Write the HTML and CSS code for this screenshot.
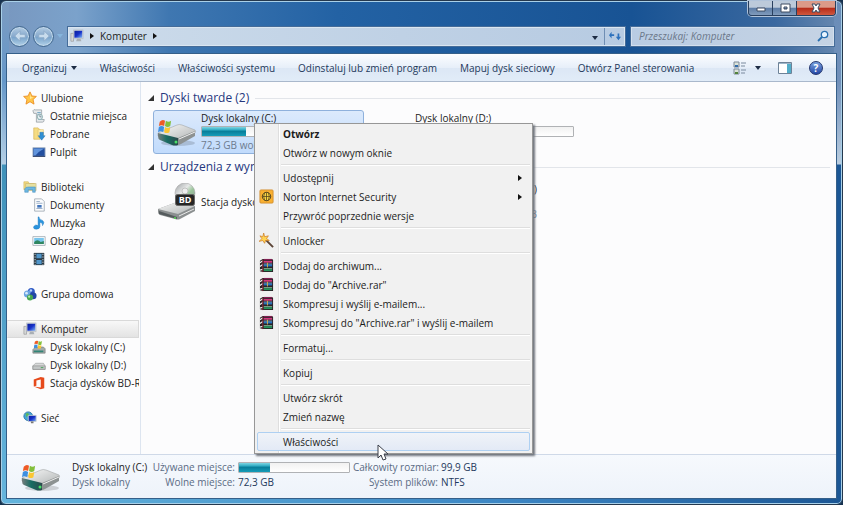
FILE: index.html
```html
<!DOCTYPE html>
<html lang="pl">
<head>
<meta charset="utf-8">
<title>Komputer</title>
<link rel="stylesheet" href="styles.css">
</head>
<body>
<svg class="sprite" aria-hidden="true">
  <defs>
    <linearGradient id="gTop" x1="0" y1="0" x2="1" y2="1"><stop offset="0" stop-color="#fafafa"/><stop offset="1" stop-color="#aeb2b2"/></linearGradient>
    <linearGradient id="gSide" x1="0" y1="0" x2="1" y2="0"><stop offset="0" stop-color="#777d7d"/><stop offset=".45" stop-color="#176c62"/><stop offset="1" stop-color="#2c4a4c"/></linearGradient>
    <linearGradient id="gDisc" x1="0" y1="0" x2="1" y2="1"><stop offset="0" stop-color="#9a9da0"/><stop offset=".4" stop-color="#e6e8e8"/><stop offset=".6" stop-color="#9cc69c"/><stop offset="1" stop-color="#8f9498"/></linearGradient>
    <linearGradient id="gBlue" x1="0" y1="0" x2="1" y2="1"><stop offset="0" stop-color="#0c1f98"/><stop offset=".5" stop-color="#1630c8"/><stop offset="1" stop-color="#7fb6f4"/></linearGradient>
  </defs>
  <symbol id="flag" viewBox="0 0 16 16"><path d="M2 3Q5 0 8 2L7 8Q4 6 1 8z" fill="#ee5a25"/><path d="M9 2Q12 4 15 2L14 8Q11 10 8 8z" fill="#83bf3b"/><path d="M1 9Q4 7 7 9L6 15Q3 13 0 15z" fill="#3e8fe0"/><path d="M8 9Q11 11 14 9L13 15Q10 17 7 15z" fill="#fbc632"/></symbol>
  <symbol id="drive" viewBox="0 0 40 26">
    <ellipse cx="21" cy="22" rx="17" ry="3" fill="#000" opacity=".15"/>
    <path d="M1 12L20 4Q22 3 25 4L38 9Q39 10 38 12L22 20 1 15z" fill="url(#gTop)" stroke="#a2a6a6" stroke-width=".6"/>
    <path d="M1 12L21 17V24Q18 25 15 24L3 19Q1 18 1 15z" fill="url(#gSide)"/>
    <path d="M21 17L38 10V15L24 23Q22 24 21 24z" fill="#8d9292"/>
    <path d="M22 18L38 11" stroke="#eee"/><circle cx="19" cy="21" r="1.5" fill="#48e068"/>
  </symbol>
  <symbol id="windrive" viewBox="0 0 40 30"><use href="#drive" y="4" width="40" height="26"/><use href="#flag" x="1" y="2" width="14" height="14"/></symbol>
  <symbol id="smalldrive" viewBox="0 0 16 16"><path d="M1 9L4 6H13L15 9V13H1z" fill="#d8dada" stroke="#969a9a" stroke-width=".7"/><path d="M1 9H15V13H1z" fill="#c3c7c7" stroke="#888" stroke-width=".7"/><path d="M10 11H13" stroke="#3a9b4e"/></symbol>
  <symbol id="smallwin" viewBox="0 0 16 16"><path d="M1 11L4 8H13L15 10V15H1z" fill="#a4aaa9" stroke="#6e7474" stroke-width=".7"/><path d="M2 12H13V14H2z" fill="#318577"/><use href="#flag" x="2" y="0" width="10" height="10"/></symbol>
  <symbol id="pc" viewBox="0 0 16 16"><path d="M1 5H4V14H1z" fill="#d5d7d8" stroke="#888" stroke-width=".6"/><path d="M4 1H15V11H4z" fill="#d4d9df" stroke="#a2a9b0" stroke-width=".5"/><path d="M5 2H14V10H5z" fill="url(#gBlue)"/><path d="M8 11H12L13 14H7z" fill="#a9afb5"/></symbol>
  <symbol id="star" viewBox="0 0 16 16"><path d="M8 1L10.200 5.700 15.300 6.200 11.500 9.700 12.600 15 8 12.200 3.400 15 4.500 9.700.7 6.200 5.800 5.700z" fill="#ffc648" stroke="#ea8b22"/><path d="M8 3L9 7 12 7 8 9z" fill="#ffeaa0"/></symbol>
  <symbol id="recent" viewBox="0 0 16 16"><path d="M1 2Q2 0 4 1H11V12H14Q14 15 12 15H5V5H2z" fill="#e6e9eb" stroke="#8c959c" stroke-width=".8"/><path d="M6 4H10M6 6H10M7 12H11" stroke="#6da0c0"/><circle cx="9" cy="9" r="3" fill="#e6f1f6" stroke="#8aa"/><path d="M9 7V9H11" stroke="#456" fill="none" stroke-width=".7"/></symbol>
  <symbol id="down" viewBox="0 0 16 16"><path d="M2 1H7L9 3V14H2z" fill="#f5dc83" stroke="#d2ae49" stroke-width=".7"/><path d="M7 3H13V12H7z" fill="#ffefb0" stroke="#d2ae49" stroke-width=".5"/><path d="M9 6H13V10H15L11 15 7 10H9z" fill="#2f8fd4" stroke="#2471ad" stroke-width=".5"/></symbol>
  <symbol id="desktop" viewBox="0 0 16 16"><path d="M1 3H15V13H1z" fill="#234f9f" stroke="#b1bdcb"/><path d="M2 4H14Q8 7 4 12H2z" fill="#6194dc"/><path d="M1 13H15" stroke="#1b2e58"/></symbol>
  <symbol id="lib" viewBox="0 0 16 16"><path d="M1 2H6L7 4H13V11H1z" fill="#f4dc82" stroke="#c9a84a" stroke-width=".6"/><path d="M3 4H15V12H3z" fill="#e6e0a0" stroke="#b9a45c" stroke-width=".5"/><path d="M2 14V10Q3 8 6 8H14V14H11V11H6V14z" fill="#6cb7e2" stroke="#3d8bbd" stroke-width=".6"/></symbol>
  <symbol id="doc" viewBox="0 0 16 16"><path d="M3 1H11L14 4V15H3z" fill="#fbfcfd" stroke="#8d98a4" stroke-width=".8"/><path d="M5 4H9M5 6H12M5 12H12" stroke="#91a7c3"/><path d="M6 8H11V11H6z" fill="#4175bd"/></symbol>
  <symbol id="note" viewBox="0 0 16 16"><path d="M8 1Q8 4 12 5Q15 7 12 11Q13 8 9 7V12Q9 15 5 15Q1 15 2 12Q4 9 7 11V1z" fill="#2a94de" stroke="#1675bd" stroke-width=".5"/></symbol>
  <symbol id="image" viewBox="0 0 16 16"><path d="M1 3H15V13H1z" fill="#fff" stroke="#8e9ba4" stroke-width=".8"/><path d="M2.500 4.500H13.500V11.500H2.500z" fill="#77c5ed"/><path d="M2.500 9Q6 5 10 9L13.500 8V11.500H2.500z" fill="#2f8660"/></symbol>
  <symbol id="film" viewBox="0 0 16 16"><path d="M2 1H14V15H2z" fill="#293945"/><path d="M5 2H11V7H5zM5 9H11V14H5z" fill="#5196ca"/><path d="M3.500 2V15M12.500 2V15" stroke="#dce3e6" stroke-dasharray="1.500 1.500"/></symbol>
  <symbol id="group" viewBox="0 0 16 16"><circle cx="9.500" cy="5" r="4" fill="#315bc5"/><circle cx="5" cy="8" r="4" fill="#6ba4e2"/><circle cx="11.500" cy="10" r="4" fill="#2346a5"/><circle cx="8" cy="12" r="3.500" fill="#48a750"/><circle cx="9" cy="4" r="1.500" fill="#b9d5fb"/><circle cx="4" cy="7" r="1.500" fill="#d6eafb"/><circle cx="7" cy="11" r="1.200" fill="#baf0b0"/></symbol>
  <symbol id="office" viewBox="0 0 16 16"><path d="M2 4L10 1 14 2V14L10 15 2 12 10 13V4L5 5V11L2 12z" fill="#e64a1c"/></symbol>
  <symbol id="net" viewBox="0 0 16 16"><circle cx="6" cy="6" r="5" fill="#47a5d6" stroke="#2a78a5"/><path d="M3 3Q6 1 7 4L4 7zM6 7L9 9 6 11z" fill="#59b85b"/><path d="M6 5H15V12H6z" fill="url(#gBlue)" stroke="#c2cbd2"/><path d="M9 12H12V14H9z" fill="#777"/></symbol>
  <symbol id="norton" viewBox="0 0 16 16"><rect x="1" y="1" width="14" height="14" rx="1" fill="#f9b030" stroke="#d39032"/><circle cx="8" cy="8" r="4.500" fill="#f7d443" stroke="#51401a"/><path d="M3.500 8H12.500M8 3.500V12.500M6 4Q4 8 6 12M10 4Q12 8 10 12" stroke="#51401a" fill="none" stroke-width=".8"/></symbol>
  <symbol id="wand" viewBox="0 0 16 16"><path d="M7 7L15 15" stroke="#5c4436" stroke-width="2"/><path d="M5 0L6 4 10 3 8 6 11 8 7 8 6 11 4 8 0 9 3 6 1 3 4 4z" fill="#ffd454" stroke="#c9741d" stroke-width=".7"/></symbol>
  <symbol id="rar" viewBox="0 0 16 16">
    <path d="M1 3L4 1H14L15 2V15H4L1 14z" fill="#2a2226"/>
    <path d="M5 1H14V2H5z" fill="#8d1e58"/><path d="M5 3H14V5H5z" fill="#d2397f"/>
    <path d="M5 6H14V7H5z" fill="#8db4dc"/><path d="M5 7H14V9H5z" fill="#2472be"/>
    <path d="M5 11H14V12H5z" fill="#9ad3b2"/><path d="M5 12H14V14H5z" fill="#239258"/>
    <path d="M1 5L4 3M1 9L4 7M1 13L4 12" stroke="#eee" stroke-width="1.400"/>
    <path d="M4 2V15" stroke="#8e2a37"/><path d="M9 5V10" stroke="#d3b04e"/>
  </symbol>
</svg>

<div class="window">
  <header class="chrome">
    <div class="caption">
      <button class="cap" aria-label="Minimalizuj"><svg viewBox="0 0 12 10"><path d="M2 5H10V8H2z"/></svg></button>
      <button class="cap" aria-label="Maksymalizuj"><svg viewBox="0 0 12 10"><path d="M2 1H11V9H2zM5 4V6H8V4z" fill-rule="evenodd"/></svg></button>
      <button class="cap close" aria-label="Zamknij"><svg viewBox="0 0 12 10"><path d="M2 1H5L6 3 7 1H10L8 5 10 9H7L6 7 5 9H2L4 5z"/></svg></button>
    </div>
    <div class="navrow">
      <div class="travel">
        <button class="round" aria-label="Wstecz"><svg viewBox="0 0 16 16"><path d="M2 8L8 2V6H14V10H8V14z"/></svg></button>
        <button class="round" aria-label="Dalej"><svg viewBox="0 0 16 16"><path d="M14 8L8 2V6H2V10H8V14z"/></svg></button>
        <span class="tri pale"></span>
      </div>
      <nav class="address" aria-label="Adres">
        <svg class="i16"><use href="#pc"/></svg>
        <span class="tri right"></span>
        <button class="crumb">Komputer</button>
        <span class="tri right"></span>
        <button class="drop" aria-label="Historia"><span class="tri"></span></button>
        <button class="refresh" aria-label="Odśwież"><svg viewBox="0 0 14 14"><path d="M0 6L3 2V5H6V7H3V10zM14 8L11 12 8 8H10V4H12V8z" fill="#2d71bd"/></svg></button>
      </nav>
      <div class="search">
        <input type="text" aria-label="Przeszukaj" placeholder="Przeszukaj: Komputer">
        <svg class="lens" viewBox="0 0 12 12"><circle cx="7.500" cy="4.500" r="3.200" fill="#eaf5ff" stroke="#2a70b0" stroke-width="1.300"/><path d="M5 7L1 11" stroke="#2a70b0" stroke-width="1.800"/></svg>
      </div>
    </div>
  </header>

  <div class="client">
    <div class="toolbar">
      <button>Organizuj <span class="tri"></span></button>
      <button>Właściwości</button>
      <button>Właściwości systemu</button>
      <button>Odinstaluj lub zmień program</button>
      <button>Mapuj dysk sieciowy</button>
      <button>Otwórz Panel sterowania</button>
      <div class="tools">
        <button aria-label="Zmień widok"><svg class="i14" viewBox="0 0 14 14"><path d="M1 1H6V6H1zM1 8H6V13H1z" fill="#dce4da" stroke="#7d8998"/><path d="M2 4H5V6H2z" fill="#326ca9"/><path d="M2 11H5V13H2z" fill="#52833c"/><path d="M8 2H13M8 5H12M8 9H13M8 12H12" stroke="#7b8a9e"/></svg><span class="tri"></span></button>
        <button aria-label="Okienko podglądu"><svg class="i14" viewBox="0 0 14 14"><path d="M.5 1.500H13.500V12.500H.5z" fill="#fff" stroke="#6d8297"/><path d="M1 2H13V3H1z" fill="#9db5c9"/><path d="M9 3H13V12H9z" fill="#52adc9"/></svg></button>
        <button aria-label="Pomoc" class="help">?</button>
      </div>
    </div>

    <div class="body">
      <nav class="tree" aria-label="Nawigacja">
        <ul>
          <li><a href="#"><svg class="i16"><use href="#star"/></svg>Ulubione</a></li>
          <li class="sub"><a href="#"><svg class="i16"><use href="#recent"/></svg>Ostatnie miejsca</a></li>
          <li class="sub"><a href="#"><svg class="i16"><use href="#down"/></svg>Pobrane</a></li>
          <li class="sub"><a href="#"><svg class="i16"><use href="#desktop"/></svg>Pulpit</a></li>
        </ul>
        <ul>
          <li><a href="#"><svg class="i16"><use href="#lib"/></svg>Biblioteki</a></li>
          <li class="sub"><a href="#"><svg class="i16"><use href="#doc"/></svg>Dokumenty</a></li>
          <li class="sub"><a href="#"><svg class="i16"><use href="#note"/></svg>Muzyka</a></li>
          <li class="sub"><a href="#"><svg class="i16"><use href="#image"/></svg>Obrazy</a></li>
          <li class="sub"><a href="#"><svg class="i16"><use href="#film"/></svg>Wideo</a></li>
        </ul>
        <ul><li><a href="#"><svg class="i16"><use href="#group"/></svg>Grupa domowa</a></li></ul>
        <ul>
          <li class="selected"><a href="#"><svg class="i16"><use href="#pc"/></svg>Komputer</a></li>
          <li class="sub"><a href="#"><svg class="i16"><use href="#smallwin"/></svg>Dysk lokalny (C:)</a></li>
          <li class="sub"><a href="#"><svg class="i16"><use href="#smalldrive"/></svg>Dysk lokalny (D:)</a></li>
          <li class="sub"><a href="#"><svg class="i16"><use href="#office"/></svg>Stacja dysków BD-ROM</a></li>
        </ul>
        <ul><li><a href="#"><svg class="i16"><use href="#net"/></svg>Sieć</a></li></ul>
      </nav>

      <main class="files">
        <section>
          <h2><span class="corner"></span>Dyski twarde (2)</h2>
          <div class="tiles">
            <div class="tile active">
              <svg class="big" viewBox="0 0 40 30"><use href="#windrive"/></svg>
              <div class="info"><span>Dysk lokalny (C:)</span><div class="bar"><i class="fill"></i></div><span class="muted">72,3 GB wolnych</span></div>
            </div>
            <div class="tile">
              <span class="big"></span>
              <div class="info"><span>Dysk lokalny (D:)</span><div class="bar"></div></div>
            </div>
          </div>
        </section>
        <section>
          <h2><span class="corner"></span>Urządzenia z wymiennym</h2>
          <div class="tiles tall">
            <div class="tile">
              <svg class="big disc" viewBox="0 0 40 38">
                <path d="M1 26L20 19Q23 18 26 19L38 23V28L23 36Q21 37 18 36L3 32Q1 31 1 29z" fill="#8b8f90"/>
                <path d="M1 26L20 19Q23 18 26 19L38 23 21 31z" fill="url(#gTop)"/><path d="M2 28L20 34V36L2 31z" fill="#555b5d"/><path d="M22 33L37 26" stroke="#e8e8e8"/><circle cx="18" cy="35" r="1" fill="#5d5"/>
                <circle cx="28" cy="10" r="10" fill="url(#gDisc)" stroke="#999" stroke-width=".5"/><circle cx="28" cy="8" r="3" fill="#eee" stroke="#aaa" stroke-width=".6"/>
                <rect x="18.500" y="11.500" width="19" height="11" rx="2" fill="#262626" stroke="#666"/><text class="bd-text" x="28" y="20" text-anchor="middle">BD</text>
              </svg>
              <div class="info"><span>Stacja dysków</span></div>
            </div>
            <div class="tile">
              <span class="big"></span>
              <div class="info tail"><span>)</span><span class="muted">B</span></div>
            </div>
          </div>
        </section>
      </main>
    </div>

    <footer class="details">
      <svg class="big" viewBox="0 0 40 30"><use href="#windrive"/></svg>
      <div class="facts">
        <span class="name">Dysk lokalny (C:)</span><span class="key">Używane miejsce:</span><div class="bar"><i class="fill"></i></div><span class="key">Całkowity rozmiar:</span><span class="val">99,9 GB</span>
        <span class="kind">Dysk lokalny</span><span class="key">Wolne miejsce:</span><span class="val">72,3 GB</span><span class="key">System plików:</span><span class="val">NTFS</span>
      </div>
    </footer>
  </div>

  <div class="menu" role="menu">
    <button role="menuitem" class="default">Otwórz</button>
    <button role="menuitem">Otwórz w nowym oknie</button>
    <hr>
    <button role="menuitem">Udostępnij<span class="tri right"></span></button>
    <button role="menuitem"><svg class="i16"><use href="#norton"/></svg>Norton Internet Security<span class="tri right"></span></button>
    <button role="menuitem">Przywróć poprzednie wersje</button>
    <hr>
    <button role="menuitem"><svg class="i16"><use href="#wand"/></svg>Unlocker</button>
    <hr>
    <button role="menuitem"><svg class="i16"><use href="#rar"/></svg>Dodaj do archiwum...</button>
    <button role="menuitem"><svg class="i16"><use href="#rar"/></svg>Dodaj do "Archive.rar"</button>
    <button role="menuitem"><svg class="i16"><use href="#rar"/></svg>Skompresuj i wyślij e-mailem...</button>
    <button role="menuitem"><svg class="i16"><use href="#rar"/></svg>Skompresuj do "Archive.rar" i wyślij e-mailem</button>
    <hr>
    <button role="menuitem">Formatuj...</button>
    <hr>
    <button role="menuitem">Kopiuj</button>
    <hr>
    <button role="menuitem">Utwórz skrót</button>
    <button role="menuitem">Zmień nazwę</button>
    <hr>
    <button role="menuitem" class="hover">Właściwości</button>
  </div>
  <svg class="pointer" viewBox="0 0 12 18" aria-hidden="true"><path d="M1 1V14L4 11 6 16 9 15 7 10H11z" fill="#fff" stroke="#3a3f4a"/></svg>
</div>
</body>
</html>
```

FILE: styles.css
```css
* { box-sizing: border-box; }
body {
  margin: 0;
  background: #16324f;
  font: 10px/14px "Open Sans", "Noto Sans", sans-serif;
  color: #1c1c1c;
}
button, input { font: inherit; color: inherit; background: none; border: 0; padding: 0; margin: 0; }
a { color: inherit; text-decoration: none; }
ul { list-style: none; margin: 0; padding: 0; }
svg { display: block; flex: none; }
.sprite { position: absolute; width: 0; height: 0; }
.i16 { width: 14px; height: 14px; }
.i14 { width: 14px; height: 14px; }
.bd-text { font: bold 9px "Open Sans", sans-serif; fill: #fff; }

.tri { display: inline-block; flex: none; border: 3px solid transparent; border-top: 4px solid #1d2c44; border-bottom: 0; }
.tri.right { border: 3px solid transparent; border-left: 4px solid #111; border-right: 0; }
.tri.pale { border-top-color: #86b5dc; }

.window {
  position: relative;
  display: flex;
  flex-direction: column;
  min-height: 100vh;
  padding: 2px 6px 6px;
  border: 1px solid #25384d;
  border-radius: 6px;
  box-shadow: inset 0 0 0 1px #a9d0e8;
  background:
    linear-gradient(#6a8db8, #7190ba 80px, #bacddf 163px, #1c5795 164px) right / 8px 100% no-repeat,
    linear-gradient(#7d9cc1, #6597c9 80px, #b5cfe5 163px, #3f91b9 164px, #66b5dd) left / 8px 100% no-repeat,
    linear-gradient(90deg, #63b4dc, #3c86c4 60%, #1c5795) bottom / 100% 8px no-repeat,
    linear-gradient(90deg, #7897bf, #7ba2cb 9%, #3f77b1 20%, #2362a4 40%, #185394 75%, #3a689f 92%, #6a8ab1);
}

.chrome { display: flex; flex-direction: column; }
.caption { display: flex; align-self: flex-end; height: 15px; margin-top: -2px; border: 1px solid #29405f; border-top: 0; border-radius: 0 0 4px 4px; box-shadow: 0 0 0 1px #b0c3da; overflow: hidden; }
.cap { width: 24px; display: flex; justify-content: center; align-items: center; background: linear-gradient(#bccada 45%, #5d7da6 50%, #809bbc); border-right: 1px solid #29405f; }
.cap svg { width: 12px; height: 10px; fill: #fff; stroke: #3d4b60; stroke-width: 1; }
.close { width: 38px; border: 0; background: linear-gradient(#dc9a88 45%, #b52a18 50%, #d0583e); }
.navrow { display: flex; align-items: center; height: 38px; padding: 8px 2px 6px; }
.travel { display: flex; align-items: center; gap: 3px; width: 58px; margin-right: 1px; }
.round { flex: none; width: 21px; height: 21px; border: 1px solid #42688f; border-radius: 50%; background: linear-gradient(#b3cce3, #86a9cd 50%, #7ba5cc 55%, #b2d1e8); box-shadow: inset 0 0 0 1px #c3d9eb; display: flex; align-items: center; justify-content: center; }
.round svg { width: 14px; height: 14px; fill: #c8dced; stroke: #8ba9c8; }
.address { flex: 1; display: flex; align-items: center; gap: 6px; height: 19px; padding-left: 1px; background: linear-gradient(90deg, #cddceb, #bfd1e5 60%, #b7cbe2); border: 1px solid #dae6f1; outline: 1px solid #456c99; }
.drop { margin-left: auto; }
.refresh { width: 20px; height: 17px; border-left: 1px solid #6f8eb3; display: flex; align-items: center; justify-content: center; }
.refresh svg { width: 12px; height: 12px; }
.search { flex: 0 0 203px; display: flex; align-items: center; height: 19px; margin-left: 6px; padding: 0 4px 0 7px; background: linear-gradient(90deg, #b9cce3, #c5d3e4); border: 1px solid #d4e0ee; outline: 1px solid #456c99; }
.search input { flex: 1; min-width: 0; outline: 0; }
.search input::placeholder { color: #6b7789; font-style: italic; opacity: 1; }
.lens { width: 12px; height: 12px; }

.client { flex: 1; display: flex; flex-direction: column; background: #fcfcfd; outline: 1px solid #355f89; }
.toolbar { display: flex; align-items: center; gap: 23px; height: 28px; padding: 0 13px 0 15px; color: #1e395b; background: linear-gradient(#fcfdff, #e7eff9 50%, #dce7f5 52%, #e1ecf8); border-bottom: 1px solid #a9b8cc; }
.toolbar button { display: flex; align-items: center; gap: 4px; white-space: nowrap; }
.tools { display: flex; align-items: center; gap: 17px; margin-left: auto; }
.tools button { gap: 8px; }
.toolbar .help { justify-content: center; width: 14px; height: 14px; border: 1px solid #22356e; border-radius: 50%; background: linear-gradient(#7aa2e0, #2447a5); color: #fff; font-weight: bold; }

.body { flex: 1; display: flex; }
.tree { flex: 0 0 134px; display: flex; flex-direction: column; gap: 17px; padding: 7px 0; border-right: 1px solid #dde5f0; overflow: hidden; }
.tree li { height: 18px; padding-left: 16px; margin-right: 1px; overflow: hidden; white-space: nowrap; }
.tree li.sub { padding-left: 25px; }
.tree a { display: flex; align-items: center; gap: 4px; height: 100%; }
.tree .selected { padding-left: 15px; border: 1px solid #d9d9d9; background: linear-gradient(#f8f8f8, #e3e3e3); border-left-color: #eee; }

.files { flex: 1; min-width: 0; padding: 8px 6px 0 7px; }
.files h2 { display: flex; align-items: center; gap: 6px; margin: 0; height: 16px; font-size: 12px; line-height: 16px; font-weight: normal; color: #25377e; white-space: nowrap; }
.files h2::after { content: ""; flex: 1; height: 1px; background: #e2e5ea; }
.corner { border: 3px solid transparent; border-right-color: #333; border-bottom-color: #333; width: 0; height: 0; }
.tiles { display: grid; grid-template-columns: repeat(auto-fill, 211px); gap: 3px; padding: 4px 0 5px 5px; }
.tile { display: flex; align-items: center; gap: 4px; height: 44px; padding: 0 3px; border: 1px solid transparent; border-radius: 3px; }
.tile.active { border-color: #8fb1dc; background: linear-gradient(#dceafc, #c1dbfc); }
.big { width: 40px; height: 30px; flex: none; }
.big.disc { height: 38px; }
.info { flex: 1; min-width: 0; height: 42px; display: flex; flex-direction: column; justify-content: center; line-height: 15px; white-space: nowrap; }
.tile .bar { margin-bottom: 1px; }
.tiles:not(.tall) .info { justify-content: flex-start; }
.muted { color: #6d7b8e; }
.bar { width: 100%; height: 11px; border: 1px solid #b0b2b5; border-radius: 1px; background: linear-gradient(#f1f1f1, #fff); }
.fill { display: block; width: 28%; height: 100%; background: linear-gradient(#7ed5e2, #2ba9c1 35%, #087c98 45%, #159cb8); }
.tall { padding-top: 3px; }
.tall .tile { height: 48px; }
.tall .tail { flex: 0 0 122px; align-items: flex-end; gap: 10px; }

.details { display: flex; align-items: center; gap: 11px; height: 44px; padding: 0 14px; background: linear-gradient(#f6f9fd, #eef3fa); border-top: 1px solid #cfd9e8; }
.facts { display: grid; grid-template-columns: 77px 83px 112px 85px auto; column-gap: 3px; row-gap: 1px; align-items: center; margin-top: -4px; white-space: nowrap; }
.key, .kind { color: #5a6b84; }
.key { text-align: right; }
.val { color: #1e395b; }

.menu { position: absolute; left: 253px; top: 122px; width: 279px; padding: 0 2px 2px; border: 1px solid #979797; background: linear-gradient(90deg, #f0f0f0 23px, #dedede 23px, #dedede 24px, #fff 24px, #fff 25px, #f1f1f1 25px); box-shadow: 2px 2px 2px #70757d; }
.menu button { display: flex; align-items: center; position: relative; width: 100%; height: 19px; padding: 0 8px 0 26px; white-space: nowrap; text-align: left; }
.menu .i16 { position: absolute; left: 2px; width: 15px; height: 15px; }
.menu .tri { margin-left: auto; }
.menu hr { height: 2px; margin: 2px 0 2px 24px; border: 0; border-top: 1px solid #dedede; border-bottom: 1px solid #fff; }
.menu .default { font-weight: bold; }
.menu .hover { border: 1px solid #aed0f2; border-radius: 2px; padding-left: 25px; background: linear-gradient(#f0f3f8, #e3eaf6); }
.pointer { position: absolute; left: 376px; top: 443px; width: 12px; height: 18px; }
```
